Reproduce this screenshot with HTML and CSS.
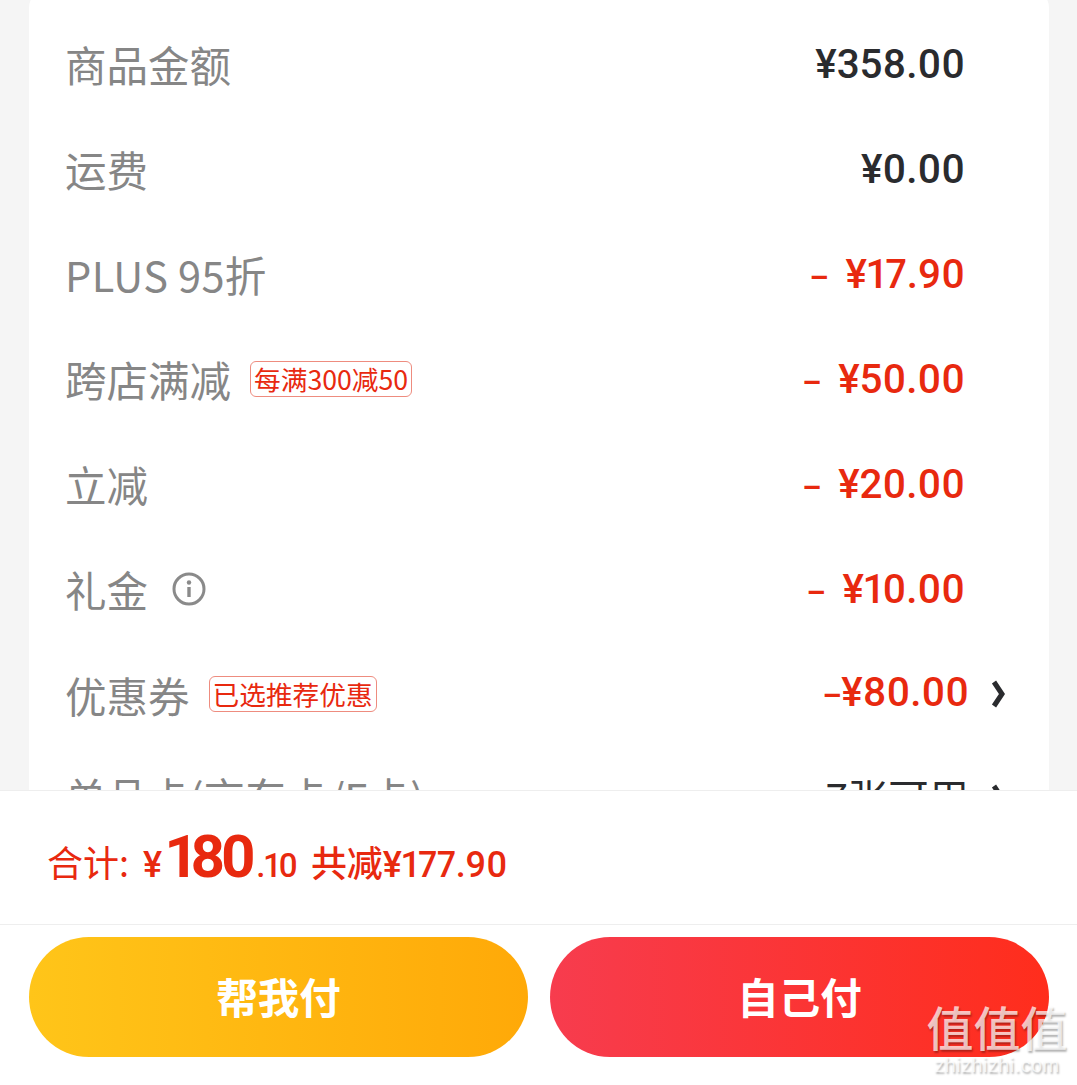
FILE: index.html

```html
<!DOCTYPE html>
<html lang="zh-CN">
<head>
  <meta charset="UTF-8">
  <meta name="viewport" content="width=device-width, initial-scale=1">
  <title>订单结算</title>
  <link rel="stylesheet" href="styles.css">
</head>
<body>
  <main class="scroll-area">
    <div class="price-card">
      <div class="price-row">
        <div class="row-label">商品金额</div>
        <div class="row-value">¥358.00</div>
      </div>
      <div class="price-row">
        <div class="row-label">运费</div>
        <div class="row-value">¥0.00</div>
      </div>
      <div class="price-row">
        <div class="row-label plus-label">PLUS 95折</div>
        <div class="row-value discount"><span class="minus">–</span>¥17.90</div>
      </div>
      <div class="price-row">
        <div class="row-label">跨店满减<span class="tag">每满300减50</span></div>
        <div class="row-value discount"><span class="minus">–</span>¥50.00</div>
      </div>
      <div class="price-row">
        <div class="row-label">立减</div>
        <div class="row-value discount"><span class="minus">–</span>¥20.00</div>
      </div>
      <div class="price-row">
        <div class="row-label">礼金
          <svg class="info-icon" viewBox="0 0 34 34" width="34" height="34">
            <circle cx="17" cy="17" r="15" fill="none" stroke="#8a8a8a" stroke-width="3"/>
            <circle cx="17" cy="10.5" r="2.2" fill="#8a8a8a"/>
            <path d="M17 15v10" fill="none" stroke="#8a8a8a" stroke-width="3.4"/>
          </svg>
        </div>
        <div class="row-value discount"><span class="minus">–</span>¥10.00</div>
      </div>
      <div class="price-row with-arrow coupon-row">
        <div class="row-label">优惠券<span class="tag">已选推荐优惠</span></div>
        <div class="row-value discount"><span class="minus tight">–</span>¥80.00</div>
        <svg class="arrow" viewBox="0 0 14 28" width="14" height="28">
          <path d="M3 2 11 14 3 26" fill="none" stroke="#2a2b2e" stroke-width="5"/>
        </svg>
      </div>
      <div class="price-row with-arrow">
        <div class="row-label">单品卡(京东卡/E卡)</div>
        <div class="row-value plain">7张可用</div>
        <svg class="arrow" viewBox="0 0 14 28" width="14" height="28">
          <path d="M3 2 11 14 3 26" fill="none" stroke="#2a2b2e" stroke-width="5"/>
        </svg>
      </div>
    </div>
  </main>

  <footer class="pay-bar">
    <div class="total-row">
      <span class="total-label">合计:</span>
      <span class="total-yen">¥</span><span class="total-big">180</span><span class="total-small">.10</span>
      <span class="total-saved">共减¥177.90</span>
    </div>
    <div class="button-row">
      <button class="pay-btn friend">帮我付</button>
      <button class="pay-btn self">自己付</button>
    </div>
  </footer>

  <div class="watermark">
    <div class="wm-logo">值值值</div>
    <div class="wm-url">zhizhizhi.com</div>
  </div>
</body>
</html>
```

FILE: styles.css

```css
:root {
  --red: #e8290f;
  --grey: #868686;
  --dark: #2a2b2e;
}
* {
  box-sizing: border-box;
}
body {
  margin: 0;
  height: 1085px;
  overflow: hidden;
  background: #f5f5f5;
  font-family: Roboto, "Noto Sans CJK SC", sans-serif;
  font-variant-numeric: proportional-nums;
}
.scroll-area {
  height: 790px;
  overflow: hidden;
  padding: 0 28px 0 29px;
}
.price-card {
  margin-top: -12px;
  padding: 25px 44px 0 36px;
  background: #fff;
  border-radius: 20px;
}
.price-row {
  display: flex;
  align-items: center;
  justify-content: space-between;
  height: 105px;
}
.coupon-row {
  height: 102px;
}
.row-label {
  display: flex;
  align-items: center;
  margin-top: -3px;
  font-size: 41.5px;
  color: var(--grey);
  font-family: "Noto Sans CJK SC", sans-serif;
}
.plus-label {
  letter-spacing: 0.4px;
}
.coupon-row .row-label {
  margin-top: 1px;
}
.row-value {
  margin-left: auto;
  margin-right: 40px;
  margin-top: -3px;
  font-size: 40.4px;
  font-weight: 500;
  color: var(--dark);
}
.row-value.discount {
  color: var(--red);
}
.row-value.plain {
  font-weight: 400;
  font-family: "Noto Sans CJK SC", sans-serif;
}
.minus {
  margin-right: 17px;
  font-size: 30px;
  font-weight: 700;
}
.minus.tight {
  margin-right: 0;
}
.with-arrow .row-value {
  margin-right: 22px;
}
.arrow {
  flex: none;
}
.tag {
  display: inline-block;
  margin-left: 19px;
  margin-top: -1px;
  padding: 0 3px;
  height: 36px;
  line-height: 33px;
  font-size: 26.7px;
  color: var(--red);
  border: 1px solid #ee8c7f;
  border-radius: 6px;
}
.info-icon {
  margin-left: 24px;
}
.pay-bar {
  height: 295px;
  background: #fff;
  border-top: 1px solid #eee;
}
.total-row {
  display: flex;
  align-items: baseline;
  height: 134px;
  padding: 30px 0 0 47px;
  border-bottom: 1px solid #eee;
  color: var(--red);
  white-space: pre;
}
.total-label {
  font-size: 36px;
  font-family: "Noto Sans CJK SC", sans-serif;
}
.total-yen {
  margin-left: 14px;
  font-size: 36px;
  font-weight: 500;
}
.total-big {
  margin-left: 4px;
  font-size: 60px;
  font-weight: 700;
  letter-spacing: -5px;
}
.total-small {
  margin-left: 5px;
  font-size: 33px;
  font-weight: 500;
  letter-spacing: -1px;
}
.total-saved {
  margin-left: 14px;
  font-size: 36px;
  font-weight: 500;
  letter-spacing: -0.1px;
}
.button-row {
  display: flex;
  gap: 22px;
  padding: 12px 28px 0 29px;
}
.pay-btn {
  flex: 1;
  height: 120px;
  border: 0;
  border-radius: 60px;
  padding-bottom: 4px;
  color: #fff;
  font-size: 41.5px;
  font-weight: 700;
  font-family: "Noto Sans CJK SC", sans-serif;
}
.pay-btn.friend {
  background: linear-gradient(90deg, #ffc519, #ffa908);
}
.pay-btn.self {
  background: linear-gradient(90deg, #f73c4e, #ff2d1c);
}
.watermark {
  position: absolute;
  left: 925px;
  top: 998px;
  width: 144px;
  text-align: center;
  color: rgba(255, 255, 255, 0.72);
  text-shadow: 1px 2px 2px rgba(0, 0, 0, 0.3);
}
.wm-logo {
  font-size: 47px;
  line-height: 56px;
  font-weight: 500;
  font-family: "Noto Sans CJK SC", sans-serif;
}
.wm-url {
  font-size: 20px;
  line-height: 22px;
  letter-spacing: 0.4px;
  font-family: "Liberation Sans", sans-serif;
}
```
